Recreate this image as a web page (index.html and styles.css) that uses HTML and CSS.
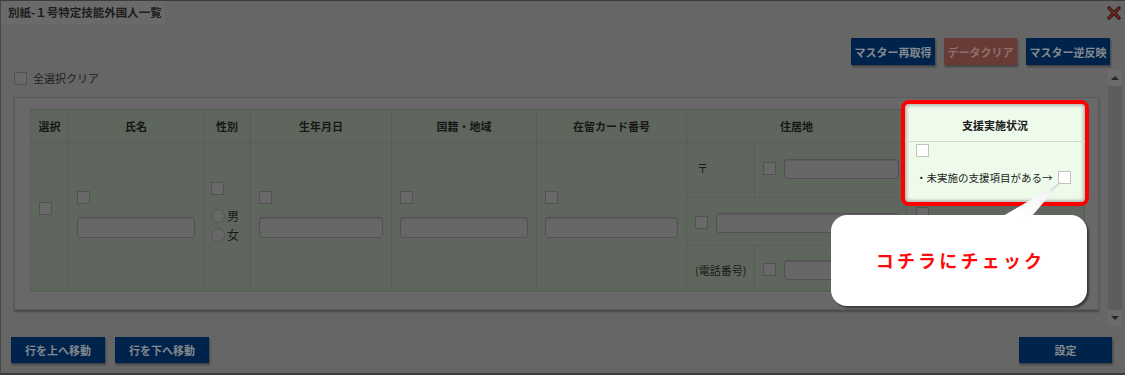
FILE: index.html
```html
<!DOCTYPE html>
<html lang="ja">
<head>
<meta charset="utf-8">
<title>別紙-１号特定技能外国人一覧</title>
<link rel="stylesheet" href="styles.css">
</head>
<body>
<div class="screen">
  <div class="titlebar">
    <div class="title-tab">別紙-１号特定技能外国人一覧</div>
    <svg class="close" width="14" height="14" viewBox="0 0 14 14"><path d="M2 2 L12 12 M12 2 L2 12" stroke="#2a1010" stroke-width="3.2" stroke-linecap="round"/><path d="M2 2 L12 12 M12 2 L2 12" stroke="#7c2822" stroke-width="1.6" stroke-linecap="round"/></svg>
  </div>

  <div class="toolbar">
    <button class="btn navy w84">マスター再取得</button>
    <button class="btn danger w73">データクリア</button>
    <button class="btn navy w84">マスター逆反映</button>
  </div>

  <div class="content">
    <div class="main">
      <label class="select-all"><span class="cb"></span><span>全選択クリア</span></label>
      <div class="panel">
        <div class="grid">
          <div class="th">選択</div>
          <div class="th">氏名</div>
          <div class="th">性別</div>
          <div class="th">生年月日</div>
          <div class="th">国籍・地域</div>
          <div class="th">在留カード番号</div>
          <div class="th">住居地</div>
          <div class="th last">支援実施状況</div>

          <div class="td sel"><span class="cb"></span></div>
          <div class="td field"><span class="cb"></span><span class="input"></span></div>
          <div class="td gender">
            <span class="cb"></span>
            <span class="radio-row"><span class="radio"></span>男</span>
            <span class="radio-row"><span class="radio"></span>女</span>
          </div>
          <div class="td field"><span class="cb"></span><span class="input"></span></div>
          <div class="td field"><span class="cb"></span><span class="input"></span></div>
          <div class="td field"><span class="cb"></span><span class="input"></span></div>
          <div class="td addr">
            <div class="sub label r1">〒</div>
            <div class="sub pair r1"><span class="cb"></span><span class="input"></span></div>
            <div class="sub pair wide r2"><span class="cb"></span><span class="input"></span></div>
            <div class="sub label r3">(電話番号)</div>
            <div class="sub pair r3"><span class="cb"></span><span class="input"></span></div>
          </div>
          <div class="td last support">
            <span class="cb"></span>
            <span class="sup-row"><span>・未実施の支援項目がある→</span><span class="cb"></span></span>
            <span class="cb second"></span>
          </div>
        </div>
      </div>
    </div>
    <div class="scrollbar">
      <div class="sb-btn"><span class="tri up"></span></div>
      <div class="sb-track"></div>
      <div class="sb-btn"><span class="tri down"></span></div>
    </div>
  </div>

  <div class="footer">
    <div class="footer-left">
      <button class="btn navy w94">行を上へ移動</button>
      <button class="btn navy w94">行を下へ移動</button>
    </div>
    <button class="btn navy w93">設定</button>
  </div>

  <div class="highlight">
    <div class="hl-head">支援実施状況</div>
    <div class="hl-body">
      <span class="cb light"></span>
      <span class="hl-row"><span>・未実施の支援項目がある→</span><span class="cb light"></span></span>
    </div>
  </div>

  <div class="callout">
    <svg class="tail" width="70" height="44" viewBox="0 0 70 44">
      <defs>
        <linearGradient id="tailg" x1="62" y1="4" x2="20" y2="38" gradientUnits="userSpaceOnUse">
          <stop offset="0" stop-color="#c6c6c6"/>
          <stop offset="0.3" stop-color="#f4f4f4"/>
          <stop offset="1" stop-color="#ffffff"/>
        </linearGradient>
      </defs>
      <polygon points="4,44 4,38 62,4 33,38 33,44" fill="url(#tailg)"/>
    </svg>
    <span class="callout-text">コチラにチェック</span>
  </div>
</div>
</body>
</html>
```

FILE: styles.css
```css
* { box-sizing: border-box; }
html, body { margin: 0; padding: 0; }
body {
  width: 1125px;
  height: 375px;
  overflow: hidden;
  background: #666666;
  font-family: "Noto Sans CJK JP", "Noto Sans", sans-serif;
  color: #1b1b1b;
}
.screen {
  position: relative;
  width: 1125px;
  height: 375px;
  border-top: 1px solid #3c3c3c;
  border-left: 1px solid #484848;
  border-bottom: 2px solid #3c3c3c;
  display: flex;
  flex-direction: column;
  background: #666666;
}

/* title */
.titlebar {
  height: 23px;
  display: flex;
  justify-content: space-between;
  align-items: flex-start;
  padding-right: 4px;
}
.title-tab {
  width: 165px;
  height: 23px;
  background: #6a6a6a;
  border-right: 1px dotted #5e5e5e;
  padding-left: 7px;
  font-size: 11.5px;
  font-weight: 700;
  line-height: 22px;
  color: #1d1d1d;
  white-space: nowrap;
}
.close { margin-top: 5px; }

/* buttons */
.btn {
  border: 0;
  margin: 0;
  padding: 0;
  font-family: inherit;
  font-size: 11px;
  font-weight: 700;
  color: #85898f;
  box-shadow: 1px 2px 2px rgba(0, 0, 0, 0.35);
  white-space: nowrap;
}
.navy { background: #00234b; }
.danger { background: #6a3b36; color: #8f706c; }
.w84 { width: 84px; }
.w73 { width: 73px; }
.w94 { width: 94px; }
.w93 { width: 93px; }

.toolbar {
  margin-top: 14px;
  height: 27px;
  display: flex;
  justify-content: flex-end;
  gap: 9px;
  padding-right: 15px;
}
.toolbar .btn { height: 27px; }

/* content */
.content {
  margin-top: 5px;
  height: 256px;
  display: flex;
  gap: 9px;
}
.main {
  padding-left: 13px;
  width: 1098px;
}
.select-all {
  height: 18px;
  display: flex;
  align-items: flex-start;
  gap: 6px;
  padding-top: 2px;
  font-size: 11px;
  line-height: 13px;
  color: #1e1e1e;
}

.cb {
  display: block;
  flex: none;
  width: 13px;
  height: 13px;
  background: #696969;
  border: 1px solid #525252;
}
.cb.light {
  background: #ffffff;
  border-color: #c2c2c2;
}
.input {
  display: block;
  height: 21px;
  background: #676767;
  border: 1px solid #525252;
  border-radius: 3px;
  box-shadow: inset 0 1px 1px rgba(0, 0, 0, 0.12);
}

.panel {
  margin-top: 9px;
  width: 1085px;
  height: 213px;
  background: #686868;
  border: 1px solid #5b5b5b;
  box-shadow: 0 2px 2px rgba(0, 0, 0, 0.3);
  padding: 11px 13px 17px 15px;
}
.grid {
  display: grid;
  grid-template-columns: 38px 135px 47px 141px 145px 150px 220px 177px;
  grid-template-rows: 33px 148px;
  border: 1px solid #565c55;
  background: #5e665d;
  box-shadow: 0 1px 0 #6e6e6e;
}
.th {
  display: flex;
  align-items: center;
  justify-content: center;
  border-right: 1px solid #565d55;
  border-bottom: 1px dotted #525851;
  font-size: 11px;
  font-weight: 700;
  color: #171717;
  padding-bottom: 1px;
}
.td {
  border-right: 1px solid #565d55;
  display: flex;
  flex-direction: column;
  align-items: flex-start;
  font-size: 11px;
}
.last { border-right: 0; }
.td.sel { padding: 59px 0 0 8px; }
.td.field { padding: 48px 8px 0 8px; }
.td.field .input { width: 100%; margin-top: 13px; }
.td.gender { padding: 39px 0 0 7px; }
.td.gender .cb { margin-bottom: 14px; }
.radio-row {
  display: flex;
  align-items: center;
  height: 14px;
  gap: 2px;
  font-size: 12px;
  line-height: 14px;
  color: #1a1a1a;
}
.radio-row + .radio-row { margin-top: 5px; }
.radio {
  width: 14px;
  height: 14px;
  border-radius: 50%;
  background: #686868;
  border: 1px solid #545454;
}

.td.addr {
  display: grid;
  grid-template-columns: 68px 1fr;
  grid-template-rows: 55px 48px 45px;
  align-items: stretch;
  padding: 0;
}
.sub {
  display: flex;
  align-items: center;
  border-bottom: 1px dotted #535952;
}
.sub.r3 { border-bottom: 0; }
.sub.label {
  border-right: 1px solid #565d55;
  padding-left: 8px;
  font-size: 11px;
  color: #1b1b1b;
}
.sub.label.r1 { padding-left: 10px; padding-bottom: 4px; }
.sub.pair {
  gap: 8px;
  padding: 0 7px 0 8px;
}
.sub.pair.r1 { padding-bottom: 3px; }
.sub.pair.r2 { padding-top: 2px; }
.sub.pair .input { flex: 1; height: 20px; }
.sub.wide { grid-column: 1 / span 2; }
.sub.label.r3, .sub.pair.r3 { padding-top: 2px; }

.td.support { padding: 2px 0 0 9px; }
.sup-row {
  display: flex;
  align-items: center;
  gap: 5px;
  margin-top: 13px;
  font-size: 10.5px;
  color: #1b1b1b;
}
.cb.second { margin-top: 21px; }

/* scrollbar */
.scrollbar {
  width: 14px;
  height: 256px;
  display: flex;
  flex-direction: column;
  background: #6b6b6b;
}
.sb-btn {
  height: 16px;
  display: flex;
  align-items: center;
  justify-content: center;
}
.sb-track {
  flex: 1;
  background: repeating-conic-gradient(#585858 0 25%, #626262 0 50%) 0 0 / 2px 2px;
}
.tri {
  width: 0;
  height: 0;
  border-left: 4px solid transparent;
  border-right: 4px solid transparent;
}
.tri.up { border-bottom: 4px solid #262626; }
.tri.down { border-top: 4px solid #262626; }

/* footer */
.footer {
  flex: 1;
  display: flex;
  justify-content: space-between;
  align-items: flex-start;
  padding: 11px 13px 0 10px;
}
.footer-left { display: flex; gap: 10px; }
.footer .btn { height: 26px; }

/* highlight overlay */
.highlight {
  position: absolute;
  left: 900px;
  top: 99px;
  width: 188px;
  height: 106px;
  border: 4px solid #ff0000;
  border-radius: 8px;
  background: #eefaea;
  box-shadow: inset 0 0 3px 2px #b7beb5;
  display: flex;
  flex-direction: column;
  overflow: hidden;
}
.hl-head {
  height: 38px;
  flex: none;
  display: flex;
  align-items: center;
  justify-content: center;
  border-bottom: 1px solid #d2dad0;
  font-size: 11px;
  font-weight: 700;
  color: #1a1a1a;
  padding-top: 4px;
}
.hl-body {
  padding: 2px 0 0 11px;
  display: flex;
  flex-direction: column;
  align-items: flex-start;
}
.hl-row {
  display: flex;
  align-items: center;
  gap: 5px;
  margin-top: 13px;
  font-size: 10.5px;
  color: #1e1e1e;
}

/* callout */
.callout {
  position: absolute;
  left: 830px;
  top: 214px;
  width: 256px;
  height: 91px;
  background: #ffffff;
  border-radius: 16px;
  box-shadow: 2px 2px 2px rgba(0, 0, 0, 0.45);
  display: flex;
  align-items: center;
  justify-content: center;
}
.tail {
  position: absolute;
  left: 168px;
  top: -37px;
}
.callout-text {
  font-size: 18px;
  font-weight: 700;
  letter-spacing: 3.2px;
  color: #ff0a0a;
  padding-left: 3px;
  padding-bottom: 2px;
}
```
